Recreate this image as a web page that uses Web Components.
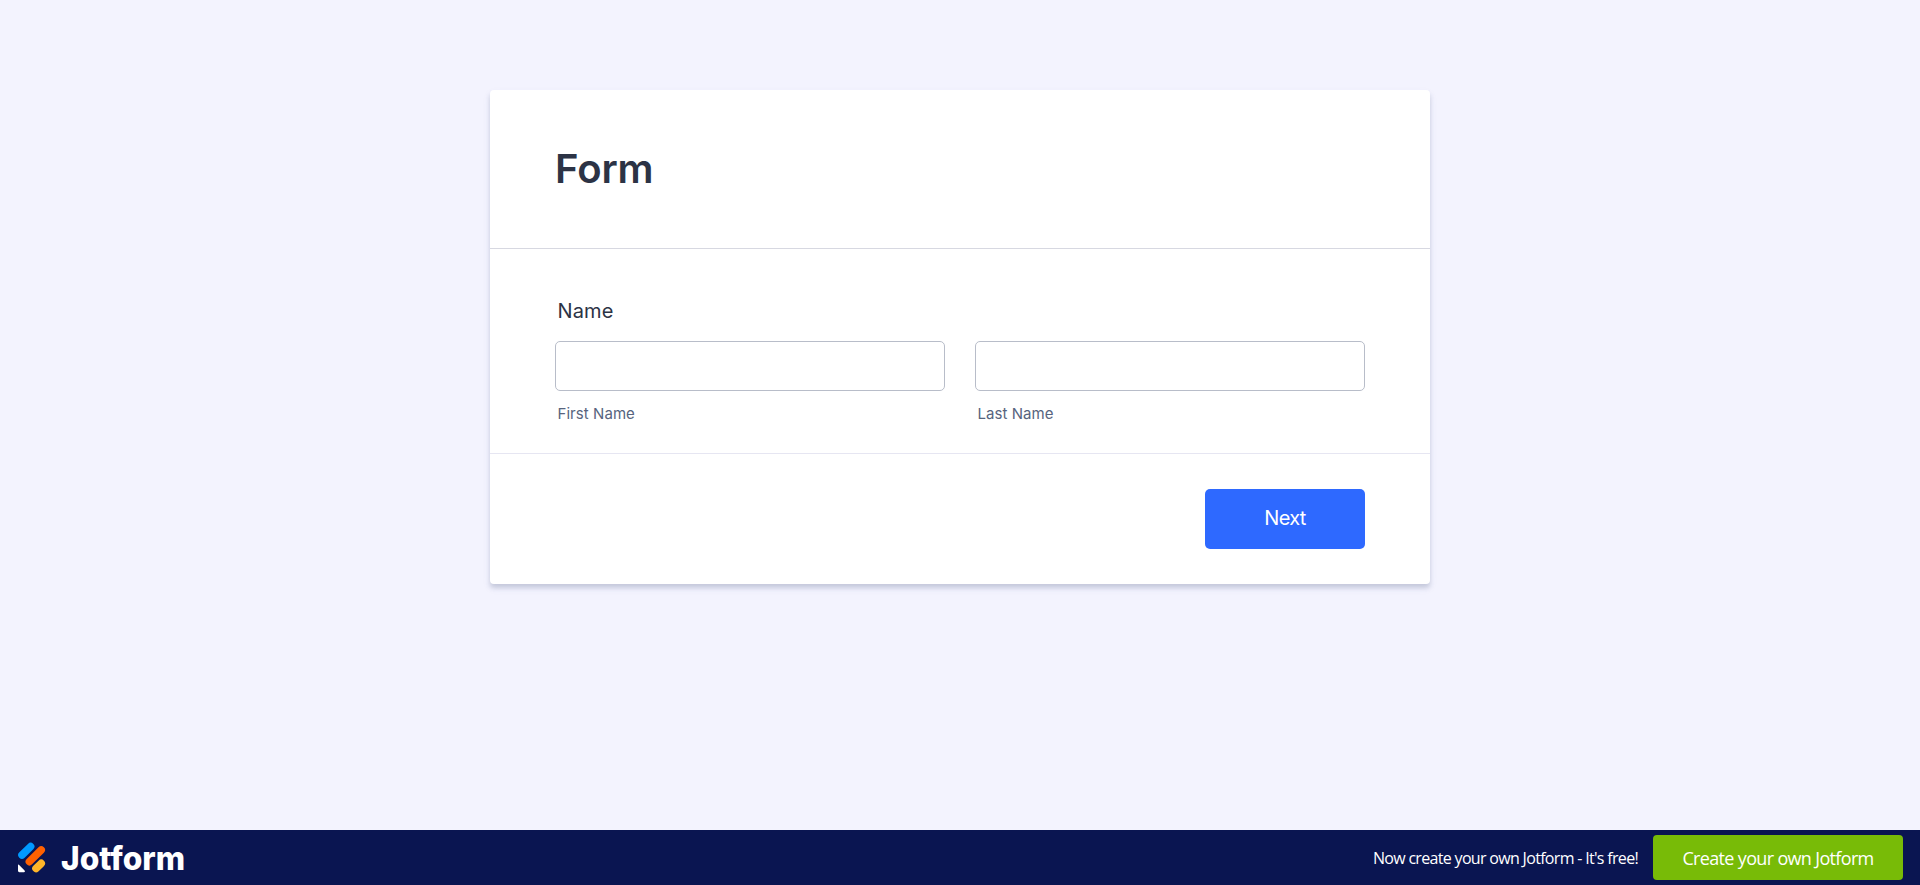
<!DOCTYPE html>
<html lang="en">
<head>
<meta charset="utf-8">
<title>Form</title>
<style>
html,body{height:100%;margin:0}
body{background:#f3f3fe;font-family:Inter,sans-serif;color:#2c3345;overflow:hidden}
</style>
</head>
<body>
<form-page>
  <form-card heading="Form">
    <name-question label="Name">
      <text-field sublabel="First Name"></text-field>
      <text-field sublabel="Last Name"></text-field>
    </name-question>
    <next-button slot="actions">Next</next-button>
  </form-card>
  <brand-footer slot="footer">
    <brand-logo slot="logo"></brand-logo>
    <span>Now create your own Jotform - It's free!</span>
    <cta-button slot="cta">Create your own Jotform</cta-button>
  </brand-footer>
</form-page>
<script>
const define = (name, html) => customElements.define(name, class extends HTMLElement {
  constructor() {
    super();
    const t = document.createElement('template');
    t.innerHTML = html;
    this.attachShadow({mode: 'open'}).append(t.content.cloneNode(true));
    this.shadowRoot.querySelectorAll('[data-attr]').forEach(n => {
      n.textContent = this.getAttribute(n.dataset.attr);
    });
  }
});

define('form-page', `
<style>
:host{display:flex;flex-direction:column;height:100vh}
main{flex:1;display:flex;justify-content:center;align-items:flex-start;padding-top:90px;box-sizing:border-box}
</style>
<main><slot></slot></main><slot name="footer"></slot>`);

define('form-card', `
<style>
:host{display:block;width:940px;background:#fff;border-radius:4px;box-shadow:0 4px 4px rgba(87,100,126,.21),0 4px 8px rgba(47,64,140,.08)}
header{box-sizing:border-box;height:159px;padding:55px 67px 0 65px;border-bottom:1px solid #d7d8e1}
h1{margin:0;font-size:40px;line-height:48px;font-weight:600;letter-spacing:-.1px}
.actions{box-sizing:border-box;height:130px;padding:35px 65px 0;display:flex;justify-content:flex-end}
</style>
<header><h1 data-attr="heading"></h1></header>
<slot></slot>
<div class="actions"><slot name="actions"></slot></div>`);

define('name-question', `
<style>
:host{display:block;box-sizing:border-box;height:205px;padding:50px 65px 0;border-bottom:1px solid #e6e6f2}
label{display:block;padding-left:2.5px;height:42px;font-size:20px;line-height:24px;font-weight:400;letter-spacing:.15px}
.fields{display:grid;grid-template-columns:1fr 1fr;gap:30px}
</style>
<label data-attr="label"></label>
<div class="fields"><slot></slot></div>`);

define('text-field', `
<style>
:host{display:block}
input{display:block;box-sizing:border-box;width:100%;height:50px;margin:0;padding:0 10px;border:1px solid #b8bdc9;border-radius:5px;background:#fff;font:20px Inter,sans-serif;outline:0}
span{display:block;padding-left:2.5px;margin-top:14px;font-size:15px;line-height:18px;color:#57647e;letter-spacing:.06px}
</style>
<input type="text"><span data-attr="sublabel"></span>`);

define('next-button', `
<style>
:host{display:block}
button{display:block;width:160px;height:60px;border:0;border-radius:5px;padding:0 0 2px;background:#2e69ff;color:#fff;font:400 20px Inter,sans-serif;letter-spacing:-.7px}
</style>
<button type="button"><slot></slot></button>`);

define('brand-footer', `
<style>
:host{display:flex;align-items:center;box-sizing:border-box;height:55px;padding:0 17px;background:#0a1551;color:#fff}
.message{margin-left:auto;margin-right:15px;padding-top:1px;font:16px/22px "Open Sans",sans-serif;letter-spacing:-.68px;white-space:nowrap}
</style>
<slot name="logo"></slot><div class="message"><slot></slot></div><slot name="cta"></slot>`);

define('brand-logo', `
<style>
:host{display:flex;height:55px}
svg{display:block}
text{font-family:Inter,sans-serif;font-weight:800;font-size:32px}
</style>
<svg width="170" height="55" viewBox="17 830 170 55" aria-label="Jotform">
  <g stroke-linecap="round" fill="none">
    <path stroke="#0099ff" stroke-width="7.6" d="M22 855 30.6 846.6"/>
    <path stroke="#ff6100" stroke-width="7.6" d="M29.4 861.6 41.2 850"/>
    <path stroke="#ffb629" stroke-width="7.6" d="M36 868.4 41.2 863.4"/>
  </g>
  <path fill="#fff" d="M18 865.2q0-1 .9-.4l5.7 5.7q1.1 1.5-.6 1.7h-4.6q-1.4 0-1.4-1.4z"/>
  <text x="61" y="870" fill="#fff" textLength="124" lengthAdjust="spacingAndGlyphs">Jotform</text>
</svg>`);

define('cta-button', `
<style>
:host{display:block}
button{display:block;width:250px;height:45px;border:0;border-radius:4px;padding:1px 0 0;background:#78bb07;color:#fff;font:400 18px "Open Sans",sans-serif;letter-spacing:-.66px;white-space:nowrap}
</style>
<button type="button"><slot></slot></button>`);
</script>
</body>
</html>
